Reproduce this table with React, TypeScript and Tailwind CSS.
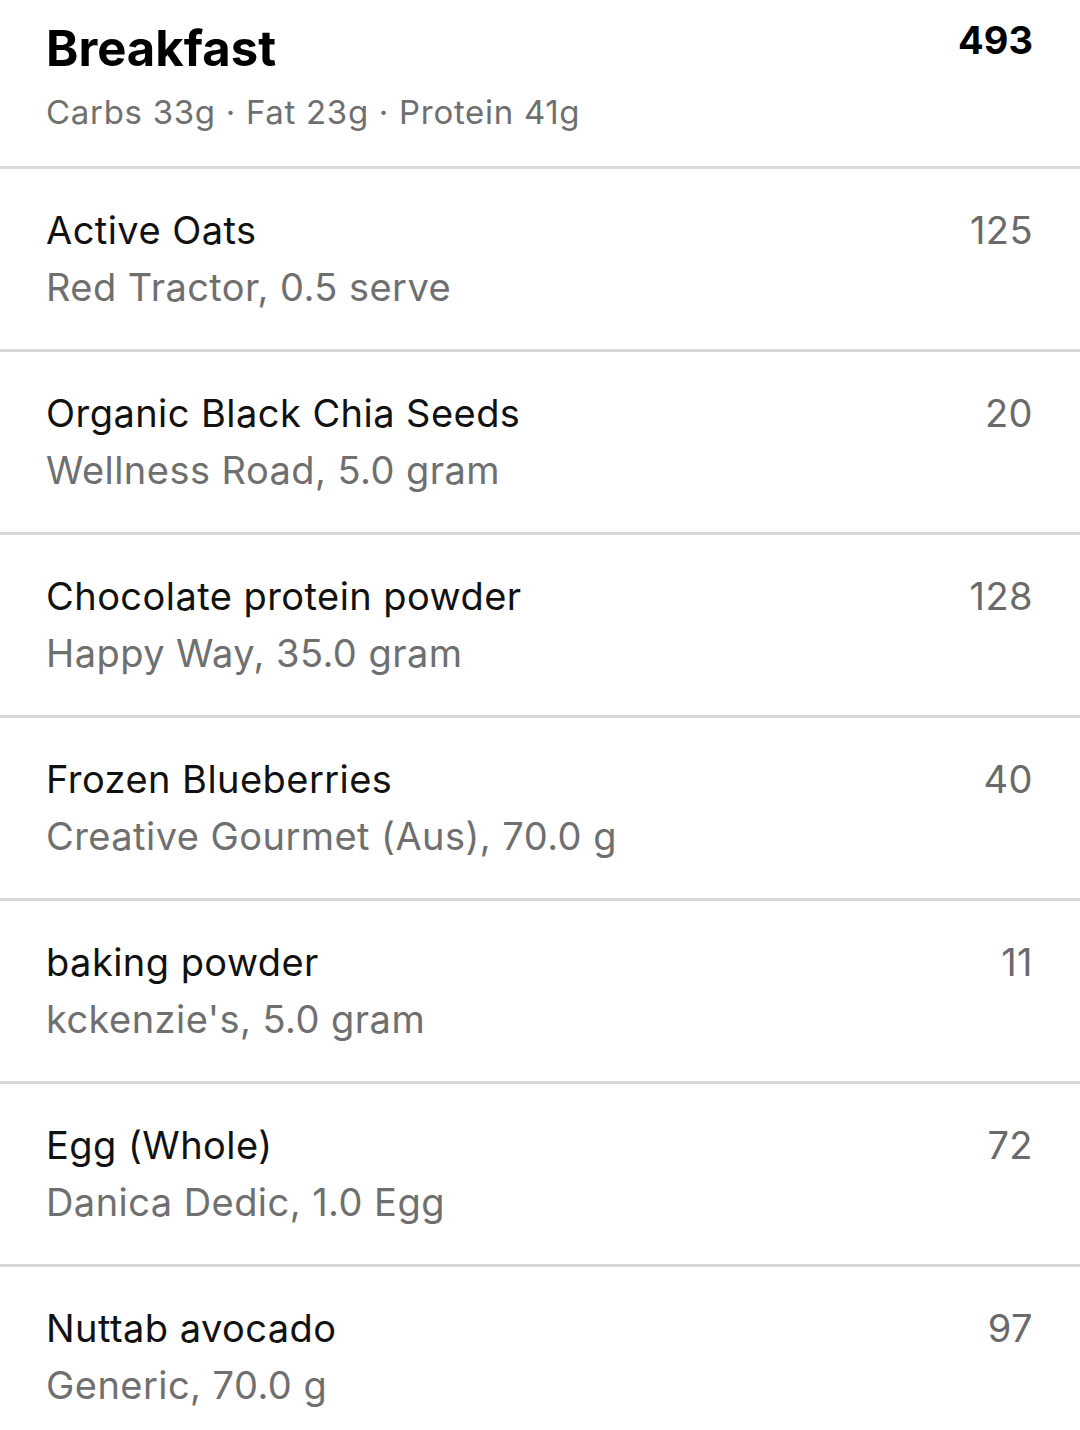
import React from 'react';

type Item = { name: string; detail: string; kcal: number };

const items: Item[] = [
  { name: 'Active Oats', detail: 'Red Tractor, 0.5 serve', kcal: 125 },
  { name: 'Organic Black Chia Seeds', detail: 'Wellness Road, 5.0 gram', kcal: 20 },
  { name: 'Chocolate protein powder', detail: 'Happy Way, 35.0 gram', kcal: 128 },
  { name: 'Frozen Blueberries', detail: 'Creative Gourmet (Aus), 70.0 g', kcal: 40 },
  { name: 'baking powder', detail: "kckenzie's, 5.0 gram", kcal: 11 },
  { name: 'Egg (Whole)', detail: 'Danica Dedic, 1.0 Egg', kcal: 72 },
  { name: 'Nuttab avocado', detail: 'Generic, 70.0 g', kcal: 97 },
];

const FoodRow = ({ item }: { item: Item }) => (
  <div className="border-t-[3px] border-[#d9d9d9] pl-[46px] pr-[47px] pt-[37px] pb-[38px] flex justify-between">
    <div className="flex flex-col gap-[9px] tracking-[0.45px]">
      <p className="text-[38px] leading-[48px] text-[#111111]">{item.name}</p>
      <p className="text-[38px] leading-[48px] text-[#6f6f6f]">{item.detail}</p>
    </div>
    <span className="text-[38px] leading-[48px] tracking-[0.45px] text-[#6a6a6a]">{item.kcal}</span>
  </div>
);

export default function App() {
  return (
    <div className="w-[1080px] h-[1430px] bg-white overflow-hidden" style={{ fontFamily: 'Inter, "Noto Sans", sans-serif' }}>
      <div className="pl-[46px] pr-[47px] pt-[20px] pb-[34px] flex justify-between">
        <div className="flex flex-col gap-[14px]">
          <h1 className="text-[49px] leading-[58px] font-bold text-black">Breakfast</h1>
          <p className="text-[33px] leading-[40px] tracking-[0.7px] text-[#6f6f6f]">Carbs 33g · Fat 23g · Protein 41g</p>
        </div>
        <span className="text-[38px] leading-[40px] font-bold text-black">493</span>
      </div>
      {items.map((item) => (
        <FoodRow key={item.name} item={item} />
      ))}
    </div>
  );
}
